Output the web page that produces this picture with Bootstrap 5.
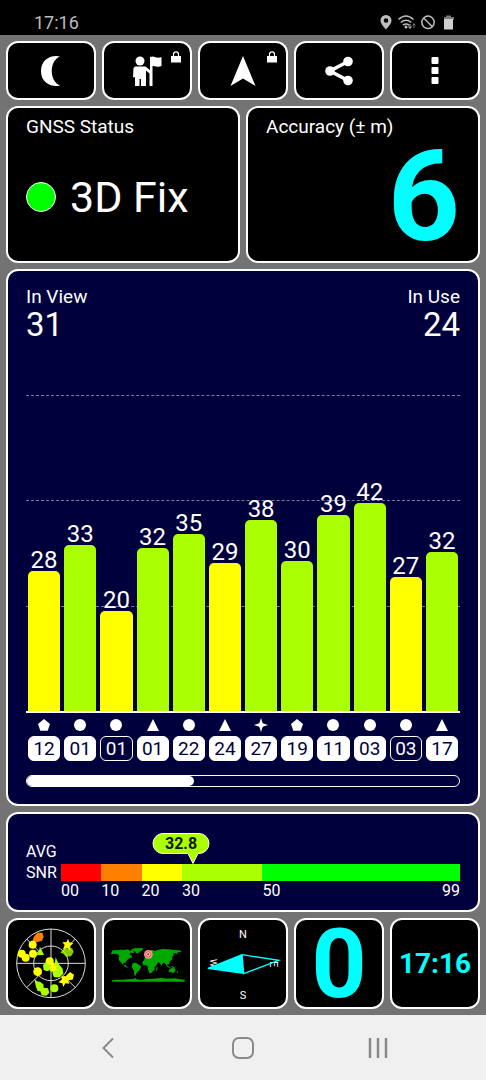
<!DOCTYPE html>
<html lang="en">
<head>
<meta charset="utf-8">
<meta name="viewport" content="width=device-width, initial-scale=1">
<title>GNSS Status</title>
<link href="https://cdn.jsdelivr.net/npm/bootstrap@5.3.0/dist/css/bootstrap.min.css" rel="stylesheet">
<style>
  :root { --navy: #00003c; --lime: #aaff00; --cyan: #00ffff; }
  body { font-family: Roboto, "Liberation Sans", sans-serif; background: #737373; color: #fff; }
  svg { display: block; }
  .statusbar { height: 35px; padding: 10px 32px 0 34px; background: #000; color: #bdbdbd; font-size: 18px; line-height: 25px; }
  .screen { gap: 6px; padding: 6px; }
  .tiles { display: grid; grid-template-columns: repeat(5, 1fr); gap: 6px; }
  .halves { display: grid; grid-template-columns: 1fr 1fr; gap: 6px; }
  .tile, .panel { background: #000; color: #fff; border: 2px solid #fff; border-radius: 12px; }
  .tile { position: relative; display: flex; align-items: center; justify-content: center; padding: 0; }
  .tile-top { height: 59px; }
  .tile-bottom { height: 91px; }
  .lock { position: absolute; top: 8px; right: 9px; }
  .panel { padding: 0 18px; }
  .panel-navy { background: var(--navy); }
  .caption { font-size: 19px; line-height: 24px; }
  .info { padding-top: 7px; padding-bottom: 6px; }
  .info-body { height: 116px; }
  .fix-dot { width: 30px; height: 30px; border: 1px solid #fff; border-radius: 50%; background: #0f0; }
  .fix-text { margin-left: 14px; font-size: 43px; line-height: 48px; }
  .tile.cyan, .cyan { color: var(--cyan); font-weight: 700; }
  .accuracy { font-size: 126px; line-height: 116px; }
  .speed { font-size: 96px; line-height: 84px; }
  .clock { font-size: 28px; line-height: 32px; }

  .sats { padding-top: 14px; padding-bottom: 17px; }
  .count { font-size: 33px; line-height: 32px; }
  .plot { position: relative; min-height: 318px; margin-top: 54px; border-bottom: 2px solid #fff; }
  .gridlines { position: absolute; inset: 0; }
  .gridlines div { border-top: 1px dashed #7c7ca0; }
  .bars { position: absolute; inset: 0; }
  .sat-row { padding-top: 6px; }
  .sat-col { flex: 1 1 0; min-width: 0; padding: 0 2px; text-align: center; }
  .snr { font-size: 24px; line-height: 22px; }
  .bar { flex-shrink: 0; background: var(--lime); border-radius: 5px 5px 0 0; }
  .bar.low { background: #ff0; }
  .sat-id { height: 25px; margin-top: 5px; border: 1px solid #fff; border-radius: 6px; background: #fff; color: var(--navy); font-size: 19px; line-height: 23px; }
  .sat-id.unused { background: var(--navy); color: #fff; }
  .scroller { height: 12px; margin-top: 14px; border: 1px solid #fff; border-radius: 6px; background: var(--navy); }
  .scroller .progress-bar { background: #fff; border-radius: 0 5px 5px 0; }

  .avg { position: relative; z-index: 0; padding-bottom: 9px; }
  .avg-label { width: 35px; padding-top: 27px; font-size: 16px; line-height: 21px; }
  .avg-scale { position: relative; padding-top: 50px; }
  .seg { height: 17px; }
  .ticks { font-size: 16px; line-height: 20px; }
  .pointer { position: absolute; top: 18px; width: 58px; margin-left: -41px; color: #101800; font-size: 16px; font-weight: 700; line-height: 23px; text-align: center; }
  .pointer svg { position: absolute; inset: 0; z-index: -1; }

  .sysnav { height: 65px; padding: 0 40px; background: #f0f0f0; }
  .sysnav button { flex: 1; border: 0; background: none; display: flex; align-items: center; justify-content: center; }
</style>
</head>
<body class="d-flex flex-column min-vh-100">

<svg width="0" height="0" class="position-absolute" aria-hidden="true">
  <symbol id="penta" viewBox="0 0 12 12"><path fill="#fff" d="M6 0l6 5-2.300 6.800H2.300L0 5z"/></symbol>
  <symbol id="round" viewBox="0 0 12 12"><circle cx="6" cy="6" r="6" fill="#fff"/></symbol>
  <symbol id="tri" viewBox="0 0 12 12"><path fill="#fff" d="M6 0l6 12H0z"/></symbol>
  <symbol id="star" viewBox="0 0 14 14"><path fill="#fff" d="M7 0l1.700 5.300L14 7 8.700 8.700 7 14 5.300 8.700 0 7l5.300-1.700z"/></symbol>
  <symbol id="padlock" viewBox="0 0 10 12"><path fill="none" stroke="#fff" stroke-width="1.200" d="M2.500 6V3.500a2.500 2.700 0 0 1 5 0V6"/><path fill="#fff" d="M0 5h10v6.500H0z"/></symbol>
</svg>

<header class="statusbar d-flex justify-content-between align-items-center">
  <span>17:16</span>
  <svg width="74" height="16" viewBox="0 0 74 16" aria-hidden="true">
    <path fill="#bdbdbd" fill-rule="evenodd" d="M6 0a5.500 5.500 0 0 1 5.500 5.500C11.500 9 6 14.500 6 14.500S.5 9 .5 5.500A5.500 5.500 0 0 1 6 0zM6 3.200a2.300 2.300 0 1 0 0 4.600 2.300 2.300 0 0 0 0-4.600z"/>
    <g fill="none" stroke="#bdbdbd" stroke-width="1.500"><path d="M18.500 4.500q7.500-7 15 0M20.800 7.500q5.200-4.500 10.400 0M23 10.200q3-2.500 6 0"/><circle cx="48" cy="7.300" r="6.200"/><path d="M43.600 3l8.800 8.700"/></g>
    <circle cx="26" cy="12" r="1.500" fill="#bdbdbd"/>
    <path d="M30 9v4M28.500 11.500L30 13.500l1.500-2" stroke="#bdbdbd" fill="none"/><path d="M34 13V9M32.800 10.500L34 8.500l1.200 2" stroke="#777" fill="none"/>
    <path fill="#777" d="M66 .500h5v1.500h3V5H64V2h2z"/><path fill="#cfcfcf" d="M64 4h9v10.500h-9z"/>
  </svg>
</header>

<main class="screen flex-grow-1 d-flex flex-column">
  <div class="tiles">
    <button type="button" class="tile tile-top" aria-label="Night mode"><svg width="20" height="32" viewBox="0 0 20 32"><path fill="#fff" d="M19 1.500C12-.5 0 3 0 16s12 16.500 19 14.500C8 26 8 6 19 1.500z"/></svg></button>
    <button type="button" class="tile tile-top" aria-label="Waypoints">
      <svg width="32" height="32" viewBox="0 0 32 32"><g fill="#fff"><circle cx="9" cy="6" r="4.500"/><path d="M4 11.500h10.500l4.500 3.500V2l2.500-.5c3 0 5 2.500 9 .5v9c-4 2-6-.5-9 0V31H18.500V18.500L15 15.500V31H10v-7H8.500v7H4v-9L2 22.500 2.500 13z"/></g></svg>
      <svg class="lock" width="10" height="12"><use href="#padlock"/></svg>
    </button>
    <button type="button" class="tile tile-top" aria-label="Navigate">
      <svg width="28" height="32" viewBox="0 0 28 32"><path fill="#fff" d="M14 1l12.500 30L14 23.500 1.500 31z"/></svg>
      <svg class="lock" width="10" height="12"><use href="#padlock"/></svg>
    </button>
    <button type="button" class="tile tile-top" aria-label="Share"><svg width="28" height="32" viewBox="0 0 28 32"><path d="M23 6.500L5 16l18 9.500" fill="none" stroke="#fff" stroke-width="3.500"/><g fill="#fff"><circle cx="23" cy="6.500" r="4.800"/><circle cx="5" cy="16" r="4.800"/><circle cx="23" cy="25.500" r="4.800"/></g></svg></button>
    <button type="button" class="tile tile-top" aria-label="Menu"><svg width="8" height="28" viewBox="0 0 8 28"><g fill="#fff"><rect width="7" height="7" x=".5" rx="1"/><rect y="10" width="7" height="7" x=".5" rx="1"/><rect y="20" width="7" height="7" x=".5" rx="1"/></g></svg></button>
  </div>

  <div class="halves">
    <section class="panel info">
      <div class="caption">GNSS Status</div>
      <div class="info-body d-flex align-items-center">
        <span class="fix-dot"></span><span class="fix-text">3D Fix</span>
      </div>
    </section>
    <section class="panel info">
      <div class="caption">Accuracy (± m)</div>
      <div class="info-body accuracy cyan text-end">6</div>
    </section>
  </div>

  <section class="panel panel-navy sats flex-grow-1 d-flex flex-column">
    <div class="d-flex justify-content-between">
      <div><div class="caption">In View</div><div class="count">31</div></div>
      <div class="text-end"><div class="caption">In Use</div><div class="count">24</div></div>
    </div>
    <div class="plot flex-grow-1">
      <div class="gridlines d-flex flex-column"><div class="flex-fill"></div><div class="flex-fill"></div><div class="flex-fill"></div></div>
      <div class="bars d-flex">
        <div class="sat-col d-flex flex-column justify-content-end"><span class="snr">28</span><div class="bar low" style="height:44.4%"></div></div>
        <div class="sat-col d-flex flex-column justify-content-end"><span class="snr">33</span><div class="bar" style="height:52.5%"></div></div>
        <div class="sat-col d-flex flex-column justify-content-end"><span class="snr">20</span><div class="bar low" style="height:31.6%"></div></div>
        <div class="sat-col d-flex flex-column justify-content-end"><span class="snr">32</span><div class="bar" style="height:51.6%"></div></div>
        <div class="sat-col d-flex flex-column justify-content-end"><span class="snr">35</span><div class="bar" style="height:56%"></div></div>
        <div class="sat-col d-flex flex-column justify-content-end"><span class="snr">29</span><div class="bar low" style="height:46.8%"></div></div>
        <div class="sat-col d-flex flex-column justify-content-end"><span class="snr">38</span><div class="bar" style="height:60.4%"></div></div>
        <div class="sat-col d-flex flex-column justify-content-end"><span class="snr">30</span><div class="bar" style="height:47.5%"></div></div>
        <div class="sat-col d-flex flex-column justify-content-end"><span class="snr">39</span><div class="bar" style="height:61.9%"></div></div>
        <div class="sat-col d-flex flex-column justify-content-end"><span class="snr">42</span><div class="bar" style="height:65.8%"></div></div>
        <div class="sat-col d-flex flex-column justify-content-end"><span class="snr">27</span><div class="bar low" style="height:42.5%"></div></div>
        <div class="sat-col d-flex flex-column justify-content-end"><span class="snr">32</span><div class="bar" style="height:50.3%"></div></div>
      </div>
    </div>
    <div class="sat-row d-flex">
      <div class="sat-col"><svg class="mx-auto" width="12" height="12"><use href="#penta"/></svg><div class="sat-id">12</div></div>
      <div class="sat-col"><svg class="mx-auto" width="12" height="12"><use href="#round"/></svg><div class="sat-id">01</div></div>
      <div class="sat-col"><svg class="mx-auto" width="12" height="12"><use href="#round"/></svg><div class="sat-id unused">01</div></div>
      <div class="sat-col"><svg class="mx-auto" width="12" height="12"><use href="#tri"/></svg><div class="sat-id">01</div></div>
      <div class="sat-col"><svg class="mx-auto" width="12" height="12"><use href="#round"/></svg><div class="sat-id">22</div></div>
      <div class="sat-col"><svg class="mx-auto" width="12" height="12"><use href="#tri"/></svg><div class="sat-id">24</div></div>
      <div class="sat-col"><svg class="mx-auto overflow-visible" width="14" height="12" viewBox="0 1 14 12"><use href="#star" width="14" height="14"/></svg><div class="sat-id">27</div></div>
      <div class="sat-col"><svg class="mx-auto" width="12" height="12"><use href="#penta"/></svg><div class="sat-id">19</div></div>
      <div class="sat-col"><svg class="mx-auto" width="12" height="12"><use href="#round"/></svg><div class="sat-id">11</div></div>
      <div class="sat-col"><svg class="mx-auto" width="12" height="12"><use href="#round"/></svg><div class="sat-id">03</div></div>
      <div class="sat-col"><svg class="mx-auto" width="12" height="12"><use href="#round"/></svg><div class="sat-id unused">03</div></div>
      <div class="sat-col"><svg class="mx-auto" width="12" height="12"><use href="#tri"/></svg><div class="sat-id">17</div></div>
    </div>
    <div class="progress scroller" role="progressbar" aria-label="Satellites shown" aria-valuenow="39" aria-valuemin="0" aria-valuemax="100"><div class="progress-bar" style="width:38.700%"></div></div>
  </section>

  <section class="panel panel-navy avg d-flex">
    <div class="avg-label">AVG<br>SNR</div>
    <div class="avg-scale flex-grow-1">
      <div class="pointer" style="left:33.1%">
        <svg width="58" height="33" viewBox="0 0 58 33"><path fill="#aaff00" stroke="#fff" d="M11 1.500h36a10 10 0 0 1 0 20H46l-5 10-5-10H11a10 10 0 0 1 0-20z"/></svg>
        32.8
      </div>
      <div class="d-flex">
        <div class="seg" style="width:10.1%;background:#ff0000"></div>
        <div class="seg" style="width:10.1%;background:#ff8000"></div>
        <div class="seg" style="width:10.1%;background:#ffff00"></div>
        <div class="seg" style="width:20.2%;background:#aaff00"></div>
        <div class="seg" style="width:49.5%;background:#00ff00"></div>
      </div>
      <div class="ticks d-flex">
        <div style="width:10.1%">00</div><div style="width:10.1%">10</div><div style="width:10.1%">20</div><div style="width:20.2%">30</div>
        <div class="d-flex justify-content-between" style="width:49.5%"><span>50</span><span>99</span></div>
      </div>
    </div>
  </section>

  <div class="tiles">
    <button type="button" class="tile tile-bottom" aria-label="Sky view">
      <svg width="84" height="79" viewBox="-3 0 252 237">
        <g fill="none" stroke="#ddd" stroke-width="3"><circle cx="123" cy="118" r="103"/><circle cx="123" cy="118" r="52"/><path d="M123 15v206M20 118h206M50 45l36 36M160 155l36 36M196 45l-36 36M86 155l-36 36"/></g>
        <path fill="#ff8000" d="M82 26l15 0 4 12-5 12-14 4-15-1 4-14z"/>
        <g fill="#ff0"><circle cx="68" cy="62" r="12"/><circle cx="35" cy="89" r="12"/><circle cx="47" cy="101" r="12"/><circle cx="69" cy="89" r="12"/><circle cx="83" cy="143" r="13"/><circle cx="119" cy="112" r="12"/><path d="M174 44l4 11 12 3-9 8 1 14-11-8-12 4 5-13-7-8 13-1zM180 144l12 8-4 15-14 2 4 10-12-1-6 11-3-11-12-3 10-8 0-10 12 0zM128 115l14 8-4 18-14 2-9-10z"/></g>
        <g fill="#aaff00"><path d="M90 68l12 25-25 1 9-10z"/><path d="M163 72l10 3 13-3 5 12-8 13-15 1-8-9-9-3z" opacity=".8"/><path d="M107 115l14 10 2 12-12 5-10-4-2-14zM137 100l9 20 12 14 2 15-11 11-17 0-4-12 4-15zM73 164l8 8 10 2 9 7 1 10 13 2 4 13-9 9-14-1-4-12-8-1-5-12z"/><circle cx="141" cy="147" r="13"/><circle cx="133" cy="193" r="12"/></g>
        <path fill="#ff0" d="M125 119l7 7 10-2-4 9 4 7-10-1-7 5-1-9-7-5 7-3z"/>
      </svg>
    </button>
    <button type="button" class="tile tile-bottom" aria-label="World map">
      <svg width="80" height="50" viewBox="-3 -5 240 150">
        <g fill="#00a800">
          <path d="M12 30l8-2 9 1 10-2 12 1 4-2 8 1 2 3 8-2 6 4-2 5-9-1-4 5 6 3 3 6-6 1-6 4-5 5-4 6-5 0-2 4 3 4 5-1 4 5 4 2-3 1-8-4-7-6-5-7-5-5-1-7 2-6-6-5-7-2-7 1-6 1 2-4z"/>
          <path d="M69 26l11-3 22-1 4 2-5 6-7 3-4 6-5-1-3-6-7-3zM75 68l7-2 8 4 7 5 3 4-4 6-4 6-5 4-4 7 0 4-4-2-1-12-3-7-4-7 1-6z"/>
          <path d="M113 55l7-2 9 4 8-1 5 8 5 6-2 4-6 6 1 7-5 5-6 6-5-1-4-11-1-9-4-3-8 0-4-6 2-7z"/>
          <path d="M111 48l1-6 5-6 7-6 8-3 8 4 12-4 12-2 18 1 14 2 16 1 8 2-2 3-8 1-4 6-2-4-8 2 1 6-5 4 1 6-5 5-4 4 1 6-6 0-1 4 4 6-4-1-5-8-5-5-4 2-3 8-4-7-5-4-5 5-7 3-5-8-9-2-1-4-7 2-4-3-6 1zM178 75l10 5-2 2-9-4zM190 76l10 3-2 3-7-2zM183 87l8-6 4 1 2-3 6 9-3 7-5 2-6-3-7 1zM146 80l3 0-2 10-3 0zM205 94l6-3-2 7z"/>
          <path d="M12 119l14-2 18 0 16-1 17-1 6-3 2 4 14 1 20-2 18-1 22-2 20 2 22-1 14 3 15 1v6H12z"/>
        </g>
        <circle cx="121" cy="41" r="13" fill="#ff9c9c"/><circle cx="121" cy="41" r="8" fill="#ffd0d0" stroke="#e84848" stroke-width="3"/><circle cx="121" cy="41" r="3" fill="#d00"/>
      </svg>
    </button>
    <button type="button" class="tile tile-bottom" aria-label="Compass">
      <svg width="86" height="86" viewBox="30 31 258 258" font-size="33" fill="#fff" text-anchor="middle">
        <text x="159" y="82">N</text><text x="159" y="266">S</text>
        <text font-size="27" transform="translate(59 157) rotate(90)">W</text>
        <text font-size="33" transform="translate(240 160) rotate(90)">E</text>
        <path d="M156 132l110 17-105 40z" fill="none" stroke="#0ff" stroke-width="4"/><path d="M156 130l5 60-108-15v-4z" fill="#0ff"/>
      </svg>
    </button>
    <button type="button" class="tile tile-bottom cyan speed">0</button>
    <button type="button" class="tile tile-bottom cyan clock">17:16</button>
  </div>
</main>

<nav class="sysnav d-flex">
  <button type="button" aria-label="Back"><svg width="12" height="22" viewBox="0 0 12 22"><path d="M11 1.500L1.500 11l9.500 9.500" fill="none" stroke="#8a8a8a" stroke-width="2"/></svg></button>
  <button type="button" aria-label="Home"><svg width="22" height="22" viewBox="0 0 22 22"><rect x="1" y="1" width="20" height="20" rx="6" fill="none" stroke="#8a8a8a" stroke-width="2"/></svg></button>
  <button type="button" aria-label="Recents"><svg width="20" height="20" viewBox="0 0 20 20"><path d="M2 0v20M10 0v20M18 0v20" stroke="#8a8a8a" stroke-width="2.500"/></svg></button>
</nav>

<script src="https://cdn.jsdelivr.net/npm/bootstrap@5.3.0/dist/js/bootstrap.bundle.min.js"></script>
</body>
</html>
